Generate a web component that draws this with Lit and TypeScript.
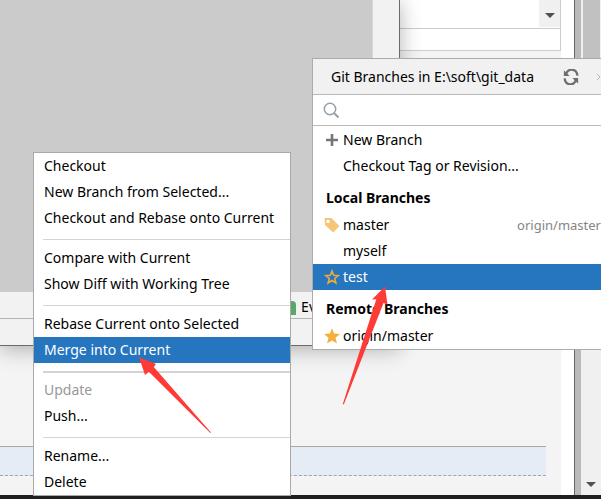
import { LitElement, html, css, svg, nothing } from "lit";
import { customElement } from "lit/decorators.js";
import { classMap } from "lit/directives/class-map.js";

const base = css`
  * { box-sizing: border-box; }
  button {
    font: inherit;
    color: inherit;
    background: none;
    border: 0;
    margin: 0;
    padding: 0;
    text-align: left;
  }
  svg { display: block; flex: none; }
`;

const STAR = "M8 0.2 L10.1 5.6 L16 6 L11.5 9.7 L13 15.6 L8 12.4 L3 15.6 L4.5 9.7 L0 6 L5.9 5.6 Z";
const STAR_LINE = "M8 2 L9.7 6.3 L14.3 6.6 L10.7 9.5 L11.9 14 L8 11.5 L4.1 14 L5.3 9.5 L1.7 6.6 L6.3 6.3 Z";

const icons: Record<string, unknown> = {
  plus: svg`<path d="M8 2v12M2 8h12" stroke="#757575" stroke-width="2.6" fill="none"/>`,
  tag: svg`<path fill="#f6c678" fill-rule="evenodd" d="M0.6 1H7.5L15.4 9 9.2 15.4 1 8ZM4 2.8A1.7 1.7 0 1 0 4 6.2 1.7 1.7 0 1 0 4 2.8Z"/>`,
  outline: svg`<path d=${STAR_LINE} fill="none" stroke="#eaaa41" stroke-width="1.6"/>`,
  star: svg`<path d=${STAR} fill="#f4af3d"/>`,
};

@customElement("context-menu")
export class ContextMenu extends LitElement {
  static styles = [base, css`
    :host { display: block; background: #fff; border: 1px solid #a9a9a9; }
    button { display: block; width: 100%; height: 26px; padding-left: 10px; line-height: 26px; white-space: nowrap; }
    .on { background: #2675bf; color: #fff; }
    button:disabled { color: #999; }
    hr { height: 1px; border: 0; background: #d3d3d3; margin: 8px 0 5px 9px; }
    .thick { height: 2px; margin-bottom: 4px; }
  `];
  groups = [
    ["Checkout", "New Branch from Selected...", "Checkout and Rebase onto Current"],
    ["Compare with Current", "Show Diff with Working Tree"],
    ["Rebase Current onto Selected", "Merge into Current"],
    ["Update", "Push..."],
    ["Rename...", "Delete"],
  ];
  render() {
    return this.groups.map((g, i) => html`
      ${i ? html`<hr class=${classMap({ thick: i === 3 })}>` : nothing}
      ${g.map(t => html`<button class=${classMap({ on: t === "Merge into Current" })} ?disabled=${t === "Update"}>${t}</button>`)}
    `);
  }
}

@customElement("branch-popup")
export class BranchPopup extends LitElement {
  static styles = [base, css`
    :host { display: block; background: #fff; border: solid #ababab; border-width: 1px 0 1px 1px; overflow: hidden; }
    header { display: flex; align-items: center; height: 36px; padding-left: 18px; background: #f1f1f1; border-bottom: 1px solid #b9b9b9; }
    h1 { flex: 1; margin: 0; font-size: inherit; font-weight: 400; white-space: nowrap; }
    .tools { display: flex; align-items: center; width: 38px; gap: 17px; overflow: hidden; }
    .search { display: flex; align-items: center; gap: 8px; height: 31px; padding-left: 10px; border-bottom: 1px solid #b9b9b9; }
    input { flex: 1; min-width: 0; border: 0; outline: 0; font: inherit; background: none; }
    .list { padding-top: 1px; }
    .row { display: flex; align-items: center; width: 100%; height: 26px; padding-left: 11px; }
    .icon { width: 16px; height: 16px; margin-right: 3px; }
    .name { flex: 1; }
    .track { color: #858585; font-size: var(--small); }
    .on { background: #2675bf; color: #fff; }
    h2 { margin: 0; height: 33px; padding: 5px 0 0 13px; font-size: inherit; line-height: 28px; font-weight: 700; }
  `];
  row(name: string, icon = "", track = "", on = false) {
    return html`<button class=${classMap({ row: true, on })}>
      <svg class="icon" viewBox="0 0 16 16" aria-hidden="true">${icon ? icons[icon] : nothing}</svg>
      <span class="name">${name}</span>${track ? html`<span class="track">${track}</span>` : nothing}
    </button>`;
  }
  render() {
    return html`
      <header>
        <h1>Git Branches in E:\\soft\\git_data</h1>
        <div class="tools">
          <button aria-label="Fetch"><svg width="16" height="16" viewBox="0 0 18 18" fill="none" stroke="#6e6e6e" stroke-width="2.6">
            <path d="M3.5 6.5A6.2 6.2 0 0 1 16 7.5M14.5 11.5A6.2 6.2 0 0 1 2 10.5"/>
            <path d="M1 1.5V8H7.5ZM17 16.5V10H10.5Z" fill="#6e6e6e" stroke="none"/></svg></button>
          <button aria-label="More"><svg width="8" height="8" viewBox="0 0 8 8" fill="none" stroke="#b8b8b8"><path d="M1 1l3 3-3 3M5 1l3 3-3 3"/></svg></button>
        </div>
      </header>
      <label class="search">
        <svg width="17" height="17" viewBox="0 0 17 17" fill="none" stroke="#96a0a8" stroke-width="1.5"><circle cx="7" cy="7" r="5.7"/><path d="M11 11l4.5 4.5" stroke-width="2"/></svg>
        <input type="text" aria-label="Search branches">
      </label>
      <div class="list">
        ${this.row("New Branch", "plus")}
        ${this.row("Checkout Tag or Revision...")}
        <h2>Local Branches</h2>
        ${this.row("master", "tag", "origin/master")}
        ${this.row("myself")}
        ${this.row("test", "outline", "", true)}
        <h2>Remote Branches</h2>
        ${this.row("origin/master", "star")}
      </div>`;
  }
}

@customElement("app-root")
export class AppRoot extends LitElement {
  static styles = [base, css`
    :host {
      --small: 13px;
      display: flex; flex-direction: column; position: relative; min-height: 100vh; overflow: hidden;
      font: 14px/20px "Noto Sans", "Open Sans", sans-serif; color: #000; background: #f4f4f4;
    }
    .desk { flex: 1; display: flex; }
    .doc { flex: 1; display: flex; flex-direction: column; }
    .field { display: flex; justify-content: flex-end; height: 29px; background: #fff; border: solid #ccc; border-width: 0 1px 1px 0; }
    .drop { display: flex; align-items: center; justify-content: center; width: 21px; height: 27px; padding-top: 4px; background: #f0f0f0; }
    .line { height: 22px; background: #fff; border: solid #ccc; border-width: 0 1px 1px 0; }
    .space { flex: 1; }
    .band { height: 30px; margin: 0 15px 19px 0; background: #e5ecf6; border-top: 1px solid #a8a8a8; border-bottom: 1px dashed #a0a6b0; }
    .gutter { width: 13px; background: #fff; }
    .frame { width: 7px; background: #bababa; border-left: 1px solid #666; }
    .scroll { display: flex; flex-direction: column; justify-content: space-between; align-items: center; width: 20px; background: #f0f0f0; padding-bottom: 8px; }
    .thumb { align-self: stretch; height: 200px; margin: 0 1px 0 2px; background: #c1c1c1; }
    .taskbar { height: 4px; background: #1f1f1f; }
    .ide { position: absolute; left: 0; top: 0; width: 400px; background: #f2f2f2; border: solid #6a6a6a; border-width: 0 1px 1px 0; box-shadow: 0 3px 20px rgba(0,0,0,.3); }
    .canvas { height: 292px; margin-right: 26px; background: #cbcbcb; border-right: 1px solid #d8d8d8; }
    .status { display: flex; justify-content: flex-end; align-items: center; gap: 5px; height: 27px; padding-right: 83px; border-bottom: 1px solid #b4b4b4; }
    .status svg { margin-top: 6px; }
    .status span { padding-top: 4px; }
    .foot { height: 26px; }
    .menu { position: absolute; left: 33px; top: 152px; width: 258px; }
    .popup { position: absolute; left: 312px; right: 0; top: 58px; }
    .arrow { position: absolute; pointer-events: none; }
    .up { left: 342px; top: 286px; }
    .back { left: 138px; top: 356px; }
  `];
  render() {
    const caret = html`<svg width="10" height="5" viewBox="0 0 10 5"><path d="M0 0h10L5 5Z" fill="#505050"/></svg>`;
    return html`
      <div class="desk">
        <div class="doc">
          <div class="field"><button class="drop" aria-label="Open list">${caret}</button></div>
          <div class="line"></div>
          <div class="space"></div>
          <div class="band"></div>
        </div>
        <div class="gutter"></div>
        <div class="frame"></div>
        <div class="scroll"><div class="thumb"></div>${caret}</div>
      </div>
      <div class="taskbar"></div>
      <section class="ide">
        <div class="canvas"></div>
        <div class="status">
          <svg width="12" height="14" viewBox="0 0 12 14"><path d="M0 0H8Q12 0 12 4V14H0Z" fill="#59a869"/></svg>
          <span>Ev</span>
        </div>
        <div class="foot"></div>
      </section>
      <branch-popup class="popup"></branch-popup>
      <context-menu class="menu"></context-menu>
      <svg class="arrow up" width="48" height="120" viewBox="0 0 48 120"><path fill="#ff3b38" d="M43 0.5L30 13.5 34.3 13.2 0.8 118 1.8 118.5 41.5 17 45.5 18.8Z"/></svg>
      <svg class="arrow back" width="74" height="79" viewBox="0 0 74 79"><path fill="#ff3b38" d="M1 1.3L18 8 15.8 11 73 76.5 72.3 77 10.8 15.8 7 19Z"/></svg>
    `;
  }
}
